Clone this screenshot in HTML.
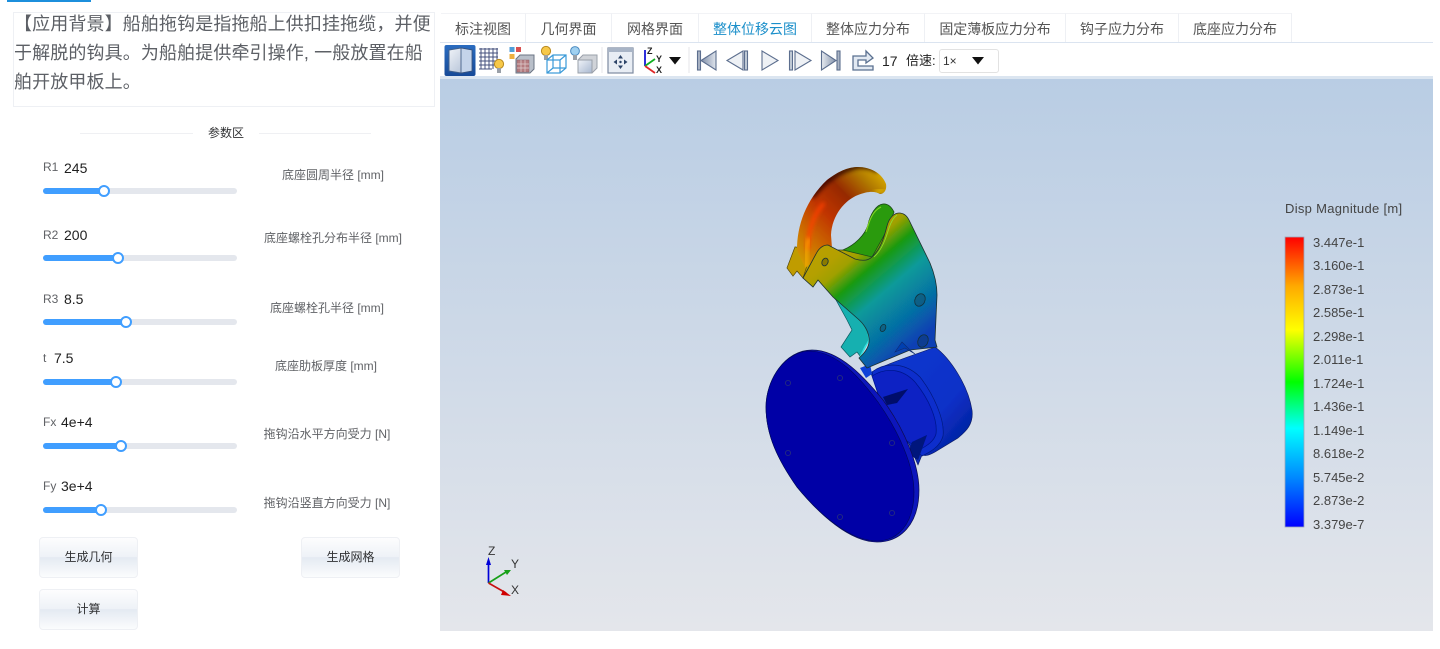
<!DOCTYPE html>
<html><head><meta charset="utf-8">
<style>
html,body{margin:0;padding:0;background:#fff;}
body{width:1440px;height:649px;position:relative;overflow:hidden;font-family:"Liberation Sans","Noto Sans CJK SC",sans-serif;}
.a{position:absolute;white-space:nowrap;}
.tr{position:absolute;left:43px;width:194px;height:6px;background:#e4e7ed;border-radius:3px;}
.fl{position:absolute;left:0;top:0;height:6px;background:#409eff;border-radius:3px;}
.h{position:absolute;top:-3px;width:8px;height:8px;margin-left:-6px;border:2px solid #409eff;background:#fff;border-radius:50%;}
.l{position:absolute;left:43px;font-size:12px;color:#606266;line-height:16px;}
.v{position:absolute;font-size:14px;color:#1f1f1f;line-height:18px;}
.d{position:absolute;font-size:12px;color:#606266;line-height:16px;white-space:nowrap;transform:translateX(-50%);}
.b{position:absolute;width:97px;height:39px;border:1px solid #eef0f4;border-radius:4px;background:linear-gradient(#fdfdfe 0%,#eef2f7 48%,#e4eaf2 50%,#fbfcfd 100%);font-size:12px;color:#303133;text-align:center;line-height:39px;}
.t{position:absolute;top:13px;height:29px;border-right:1px solid #eef0f4;border-top:1px solid #f2f3f6;font-size:14px;color:#555;text-align:center;line-height:30px;}
.ll{position:absolute;left:1313px;font-size:13px;color:#444;line-height:16px;}
</style></head><body>
<div class="a" style="left:7px;top:0;width:84px;height:1.5px;background:#1c8fdc"></div>
<div class="a" style="left:13px;top:12px;width:420px;height:93px;border:1px solid #eef0f4"></div>
<div class="a" style="left:14px;top:10px;width:421px;font-size:18px;line-height:29px;color:#5d6066;white-space:nowrap;letter-spacing:.12px">【应用背景】船舶拖钩是指拖船上供扣挂拖缆，并便<br>于解脱的钩具。为船舶提供牵引操作, 一般放置在船<br>舶开放甲板上。</div>
<div class="a" style="left:80px;top:133px;width:113px;height:1px;background:#eff0f3"></div>
<div class="a" style="left:259px;top:133px;width:112px;height:1px;background:#eff0f3"></div>
<div class="a" style="left:208px;top:125px;font-size:12px;color:#303133;line-height:17px">参数区</div>

<div class="l" style="top:159px">R1</div><div class="v" style="left:64px;top:159px">245</div>
<div class="tr" style="top:188px"><div class="fl" style="width:61px"></div><div class="h" style="left:61px"></div></div>
<div class="d" style="left:333px;top:167px">底座圆周半径 [mm]</div>

<div class="l" style="top:227px">R2</div><div class="v" style="left:64px;top:226px">200</div>
<div class="tr" style="top:255px"><div class="fl" style="width:75px"></div><div class="h" style="left:75px"></div></div>
<div class="d" style="left:333px;top:230px">底座螺栓孔分布半径 [mm]</div>

<div class="l" style="top:291px">R3</div><div class="v" style="left:64px;top:290px">8.5</div>
<div class="tr" style="top:319px"><div class="fl" style="width:83px"></div><div class="h" style="left:83px"></div></div>
<div class="d" style="left:327px;top:300px">底座螺栓孔半径 [mm]</div>

<div class="l" style="top:350px">t</div><div class="v" style="left:54px;top:349px">7.5</div>
<div class="tr" style="top:379px"><div class="fl" style="width:73px"></div><div class="h" style="left:73px"></div></div>
<div class="d" style="left:326px;top:358px">底座肋板厚度 [mm]</div>

<div class="l" style="top:414px">Fx</div><div class="v" style="left:61px;top:413px">4e+4</div>
<div class="tr" style="top:443px"><div class="fl" style="width:78px"></div><div class="h" style="left:78px"></div></div>
<div class="d" style="left:327px;top:426px">拖钩沿水平方向受力 [N]</div>

<div class="l" style="top:478px">Fy</div><div class="v" style="left:61px;top:477px">3e+4</div>
<div class="tr" style="top:507px"><div class="fl" style="width:58px"></div><div class="h" style="left:58px"></div></div>
<div class="d" style="left:327px;top:495px">拖钩沿竖直方向受力 [N]</div>

<div class="b" style="left:39px;top:537px">生成几何</div>
<div class="b" style="left:301px;top:537px">生成网格</div>
<div class="b" style="left:39px;top:589px">计算</div>

<!-- tabs -->
<div class="t" style="left:441px;width:84px">标注视图</div>
<div class="t" style="left:526px;width:85px">几何界面</div>
<div class="t" style="left:612px;width:86px">网格界面</div>
<div class="t" style="left:699px;width:112px;color:#1b8fca">整体位移云图</div>
<div class="t" style="left:812px;width:112px">整体应力分布</div>
<div class="t" style="left:925px;width:140px;letter-spacing:-.1px">固定薄板应力分布</div>
<div class="t" style="left:1066px;width:112px">钩子应力分布</div>
<div class="t" style="left:1179px;width:112px">底座应力分布</div>
<div class="a" style="left:440px;top:42px;width:993px;height:1px;background:#dbe4f0"></div>

<!-- viewport -->
<div class="a" style="left:440px;top:79px;width:993px;height:552px;background:linear-gradient(#b9cde4,#e4e6eb)"></div>
<div class="a" style="left:440px;top:76px;width:993px;height:3px;background:#dbe5f0"></div>

<!-- toolbar text -->
<div class="a" style="left:882px;top:52px;font-size:14px;color:#222;line-height:18px">17</div>
<div class="a" style="left:906px;top:52px;font-size:13px;color:#222;line-height:18px">倍速:</div>
<div class="a" style="left:939px;top:49px;width:58px;height:22px;border:1px solid #e2e2e2;border-radius:3px;background:#fff"></div>
<div class="a" style="left:943px;top:53px;font-size:12px;color:#333;line-height:16px">1×</div>

<svg class="a" style="left:0;top:0" width="1440" height="649" viewBox="0 0 1440 649" xmlns="http://www.w3.org/2000/svg">
<defs>
<linearGradient id="pl" gradientUnits="userSpaceOnUse" x1="823" y1="250" x2="908" y2="349">
<stop offset="0" stop-color="#b8a000"/><stop offset=".1" stop-color="#b4a000"/><stop offset=".2" stop-color="#a0a000"/><stop offset=".34" stop-color="#1a9a10"/><stop offset=".55" stop-color="#089a9a"/><stop offset=".8" stop-color="#0670a4"/><stop offset="1" stop-color="#0840b4"/></linearGradient>
<linearGradient id="hk" gradientUnits="userSpaceOnUse" x1="800" y1="262" x2="884" y2="180">
<stop offset="0" stop-color="#d09a00"/><stop offset=".22" stop-color="#cc6a00"/><stop offset=".45" stop-color="#c03400"/><stop offset=".68" stop-color="#962a00"/><stop offset=".88" stop-color="#b07800"/><stop offset="1" stop-color="#d0a000"/></linearGradient>
<linearGradient id="cy" x1="0" y1="0" x2="1" y2="1"><stop offset="0" stop-color="#0a3ad0"/><stop offset=".62" stop-color="#0a30c8"/><stop offset="1" stop-color="#001a88"/></linearGradient>
<linearGradient id="lg" x1="0" y1="0" x2="0" y2="1"><stop offset="0" stop-color="#f00"/><stop offset=".17" stop-color="#fa0"/><stop offset=".32" stop-color="#ff0"/><stop offset=".5" stop-color="#0f0"/><stop offset=".66" stop-color="#0ff"/><stop offset=".83" stop-color="#08f"/><stop offset="1" stop-color="#00f"/></linearGradient>
<linearGradient id="btn" x1="0" y1="0" x2="0" y2="1"><stop offset="0" stop-color="#2a6cc0"/><stop offset="1" stop-color="#174a98"/></linearGradient>
<linearGradient id="cb" x1="0" y1="0" x2="1" y2="1"><stop offset="0" stop-color="#f0f3f8"/><stop offset="1" stop-color="#a8b8d0"/></linearGradient>
<linearGradient id="ng" x1="0" y1="0" x2="1" y2="0"><stop offset="0" stop-color="#7f8ea8"/><stop offset="1" stop-color="#dfe4ec"/></linearGradient>
<linearGradient id="ngr" x1="0" y1="0" x2="1" y2="0"><stop offset="0" stop-color="#e6eaf0"/><stop offset="1" stop-color="#8493ab"/></linearGradient>
<filter id="b2" x="-30%" y="-30%" width="160%" height="160%"><feGaussianBlur stdDeviation="2"/></filter>
<filter id="b1"><feGaussianBlur stdDeviation=".35"/></filter>
<clipPath id="hc"><path d="M797 250C797 225 806 200 827 180C840 170 850 167 858 167C870 167 882 173 886 184C887 190 884 194 880 194C875 191 868 191 858 195C845 200 832 215 831 235L832 248L805 268Z"/></clipPath>
</defs>

<!-- 3D model -->
<g filter="url(#b1)">
<path d="M870 373C890 362 915 355 935 347C950 358 968 385 972 410C974 425 965 432 958 438L935 452C928 456 925 456 922 455L918 465L890 400Z" fill="url(#cy)" stroke="#0a1a60" stroke-width=".6"/>
<path d="M872 372C885 362 905 362 920 377C934 395 945 420 943 436C940 447 930 452 922 456L905 440L880 400Z" fill="#0a2ecc" stroke="#061a80" stroke-width=".7"/>
<path d="M872 376C888 366 904 370 915 382C929 399 938 420 936 434C934 441 928 445 921 449L905 440L880 400Z" fill="#0820c4" stroke="#04148a" stroke-width=".7"/>
<path d="M883 397L908 389L897 403L887 405Z" fill="#04106a"/>
<path d="M912 442L927 435L918 460L908 454Z" fill="#03147c"/>
<path d="M860 368L870 364L872 374L866 378Z" fill="#0a40d8"/>
<path d="M766 407C766 380 785 350 812 350C840 350 865 378 883 400C905 430 919 465 919 490C919 525 900 542 877 542C850 542 820 515 797 487C778 460 766 435 766 407Z" fill="#0b14bc" stroke="#0a1050" stroke-width=".7"/>
<path d="M766 407C766 380 785 351 810 351C838 352 860 378 878 402C899 432 914 466 914 492C914 525 897 541 877 541C850 541 820 515 797 487C778 460 766 435 766 407Z" fill="#0000a6" stroke="#05085a" stroke-width=".6"/>
<g fill="none" stroke="#222a80" stroke-width=".9">
<circle cx="788" cy="383" r="2.6"/><circle cx="840" cy="378" r="2.6"/><circle cx="892" cy="443" r="2.6"/><circle cx="788" cy="453" r="2.6"/><circle cx="840" cy="517" r="2.6"/><circle cx="892" cy="513" r="2.6"/></g>

<!-- back plate -->
<path d="M787 268L795 247L830 250L843 250C855 245 865 235 868 225C870 215 876 204 884 204C889 204 892 208 894 212L887 230L880 250L868 262L820 262L803 278L797 271L793 276Z" fill="url(#pl)" stroke="#3a4a1a" stroke-width=".7"/>
<path d="M787 268L795 247L812 250L803 278L797 271L793 276Z" fill="#c09c00" stroke="#5a4a10" stroke-width=".6"/>
<path d="M843 250C855 245 865 235 868 225C870 215 876 204 884 204C889 204 892 208 894 212L887 230L872 257Z" fill="#2a9a10" stroke="#1a4a1a" stroke-width=".7"/>
<path d="M866 232C869 222 872 211 881 207" fill="none" stroke="#7ed020" stroke-width="1.2"/>
<path d="M820 282L836 300L847 320L852 330L841 347L850 357L857 352L860 356L869 340L868 328L855 315Z" fill="#14b0b0" stroke="#0d5a60" stroke-width=".7"/>
<path d="M866 345L860 357L869 340L868 330" fill="none" stroke="#35e0e0" stroke-width="1.4"/>

<!-- hook -->
<path d="M797 250C797 225 806 200 827 180C840 170 850 167 858 167C870 167 882 173 886 184C887 190 884 194 880 194C875 191 868 191 858 195C845 200 832 215 831 235L832 248L805 268Z" fill="url(#hk)"/>
<g clip-path="url(#hc)">
<path d="M812 197C825 180 840 170 858 166C868 166 874 168 878 171" fill="none" stroke="#2a0400" stroke-width="5" stroke-opacity=".85" filter="url(#b2)"/>
<path d="M808 250C808 230 813 215 824 203" fill="none" stroke="#ff4000" stroke-width="3.500" filter="url(#b2)"/>
<path d="M806 268C806 255 806 247 809 238" fill="none" stroke="#ffb000" stroke-width="3" filter="url(#b2)"/>
<path d="M875 192L884 190" stroke="#e8c000" stroke-width="3" filter="url(#b2)"/>
</g>

<!-- front plate -->
<path d="M803 278L816 254C819 248 823 245 828 245L855 259C862 261 868 261 872 257C880 250 884 238 887 226C889 218 894 213 899 213C904 213 907 216 909 220L930 263C935 275 937 285 937 295L935 340L937 347L910 350L867 368L859 358C866 352 870 345 869 338C868 330 863 323 857 318L833 297Q825 288 818 280L813 287Z" fill="url(#pl)" stroke="#1d3030" stroke-width=".8"/>
<path d="M874 257C882 250 886 238 889 228C891 222 894 217 897 215" fill="none" stroke="#8ee030" stroke-width=".8"/>
<g fill="#0c3a50" fill-opacity=".35" stroke="#12303a" stroke-width=".8">
<ellipse cx="825" cy="262" rx="3" ry="4" transform="rotate(25 825 262)" fill="#8a7a00" fill-opacity="1"/>
<ellipse cx="920" cy="300" rx="5" ry="6.5" transform="rotate(25 920 300)"/>
<ellipse cx="883" cy="328" rx="2.6" ry="3.8" transform="rotate(25 883 328)"/>
<ellipse cx="923" cy="341" rx="5" ry="6.5" transform="rotate(25 923 341)"/>
</g>
<path d="M895 352L905 348L915 354L910 350L902 342Z" fill="#0640b0" stroke="#0a2a70" stroke-width=".6"/>
</g>

<!-- axis triad -->
<g fill="none" stroke-width="1.7">
<path d="M488.5 583V563" stroke="#0000d8"/><path d="M488.5 583L506 572" stroke="#18a018"/><path d="M488.5 583L506 593" stroke="#c81010"/></g>
<path d="M488.5 557L491 565H486Z" fill="#0000d8"/><path d="M511 570L504 570L507 575Z" fill="#18a018"/><path d="M511 596L503 590L501 595Z" fill="#d00000"/>
<g font-size="12" fill="#333" font-family="Liberation Sans,sans-serif"><text x="488" y="555">Z</text><text x="511" y="568">Y</text><text x="511" y="594">X</text></g>

<!-- legend -->
<rect x="1285" y="237" width="19" height="290" fill="url(#lg)" stroke="#9aa6ba" stroke-width=".8"/>

<!-- toolbar icons -->
<rect x="444.5" y="45" width="31" height="31" rx="2" fill="url(#btn)"/>
<path d="M449 50L461 48L472 50V71L461 73L449 71Z" fill="url(#cb)" stroke="#40608c"/><path d="M461 48L472 50V71L461 73Z" fill="#c4d4ea" stroke="#35507c" stroke-width=".8"/>

<g stroke="#44507c" stroke-width="1" fill="none"><path d="M479 49H498M479 53H498M479 57H498M479 61H498M479 65H495M479 69H492M481 48V69M485 48V69M489 48V69M493 48V69M497 48V62"/></g>
<circle cx="499" cy="64" r="4.6" fill="#f7c848" stroke="#b98a20"/><rect x="497" y="68" width="4" height="5" fill="#9aa0a8"/>

<rect x="509.5" y="47" width="5" height="5" fill="#4f9ed8"/><rect x="516" y="47" width="5" height="5" fill="#d85050"/><rect x="509.5" y="54" width="5" height="5" fill="#eeb040"/>
<path d="M516 59L520 55H534V69L530 73H516Z" fill="#b9bfc9" stroke="#6b7484"/><rect x="517" y="60" width="12" height="12" fill="#b57c80" stroke="#8c6068" stroke-width=".5"/>
<path d="M521 60V72M525 60V72M517 64H529M517 68H529" stroke="#e0d0d0" stroke-width=".7"/>

<circle cx="546" cy="51" r="4.6" fill="#f7c848" stroke="#b98a20"/><rect x="544" y="55" width="4" height="5" fill="#9aa0a8"/>
<g fill="none" stroke="#3a9ad8" stroke-width="1.2"><rect x="547" y="60" width="13" height="13"/><path d="M547 60L553 55H566V68L560 73M560 60L566 55M553 55V68H566M547 73L553 68"/></g>

<circle cx="575" cy="51" r="4.4" fill="#9fd0f0" stroke="#4a8ac0"/><rect x="573" y="55" width="4" height="5" fill="#9aa0a8"/>
<path d="M578 60L583 55H597V68L592 73H578Z" fill="#d0d3d8" stroke="#9aa0aa"/><rect x="578" y="60" width="14" height="13" fill="url(#cb)" stroke="#9aa0aa"/>

<path d="M602 47V73" stroke="#e4e6ea"/>

<rect x="608" y="48" width="25" height="25" fill="#e8edf4" stroke="#7d8aa0" stroke-width="1.2"/><rect x="608" y="48" width="25" height="4" fill="#a8b4c6"/>
<g fill="#2d4468"><path d="M620.5 55L618 58.500H623ZM620.5 69L618 65.500H623ZM613.5 62L617 59.500V64.500ZM627.500 62L624 59.500V64.500Z"/><circle cx="620.500" cy="62" r="1.200"/></g>

<path d="M645 66V50" stroke="#1818d8" stroke-width="1.8"/><path d="M645 66L655 59" stroke="#10b020" stroke-width="1.8"/><path d="M645 66L655 73" stroke="#e02828" stroke-width="1.8"/>
<text x="647" y="54" font-size="9" font-weight="bold" fill="#222">Z</text><text x="656" y="62" font-size="9" font-weight="bold" fill="#222">Y</text><text x="656" y="73" font-size="9" font-weight="bold" fill="#222">X</text>
<path d="M669 57H681L675 64.500Z" fill="#111"/>
<path d="M689 47V73" stroke="#e4e6ea"/>

<g stroke="#5c6e8e" stroke-width="1.1">
<rect x="697.500" y="51" width="3" height="19" fill="#aab4c4"/><path d="M716 51V70L701 60.500Z" fill="url(#ng)"/>
<path d="M743 51V70L727 60.500Z" fill="#eef1f5"/><rect x="744.500" y="51" width="3" height="19" fill="#c4ccd8"/>
<path d="M762 51V70L778 60.500Z" fill="#eef1f5"/>
<rect x="789.500" y="51" width="3" height="19" fill="#c4ccd8"/><path d="M795 51V70L811 60.500Z" fill="#eef1f5"/>
<path d="M821.500 51V70L836 60.500Z" fill="url(#ngr)"/><rect x="837" y="51" width="3" height="19" fill="#aab4c4"/>
</g>
<path d="M853 70V56H866V51L873 58L866 63V60H858V66H873V70Z" fill="#e2e9f2" stroke="#5a7090" stroke-width="1.300"/>
<path d="M972 57H984L978 64.500Z" fill="#111"/>
</svg>

<div class="a" style="left:1285px;top:201px;font-size:13px;color:#444;line-height:16px;letter-spacing:.3px">Disp Magnitude [m]</div>
<div class="ll" style="top:235px">3.447e-1</div>
<div class="ll" style="top:258px">3.160e-1</div>
<div class="ll" style="top:282px">2.873e-1</div>
<div class="ll" style="top:305px">2.585e-1</div>
<div class="ll" style="top:329px">2.298e-1</div>
<div class="ll" style="top:352px">2.011e-1</div>
<div class="ll" style="top:376px">1.724e-1</div>
<div class="ll" style="top:399px">1.436e-1</div>
<div class="ll" style="top:423px">1.149e-1</div>
<div class="ll" style="top:446px">8.618e-2</div>
<div class="ll" style="top:470px">5.745e-2</div>
<div class="ll" style="top:493px">2.873e-2</div>
<div class="ll" style="top:517px">3.379e-7</div>
</body></html>
